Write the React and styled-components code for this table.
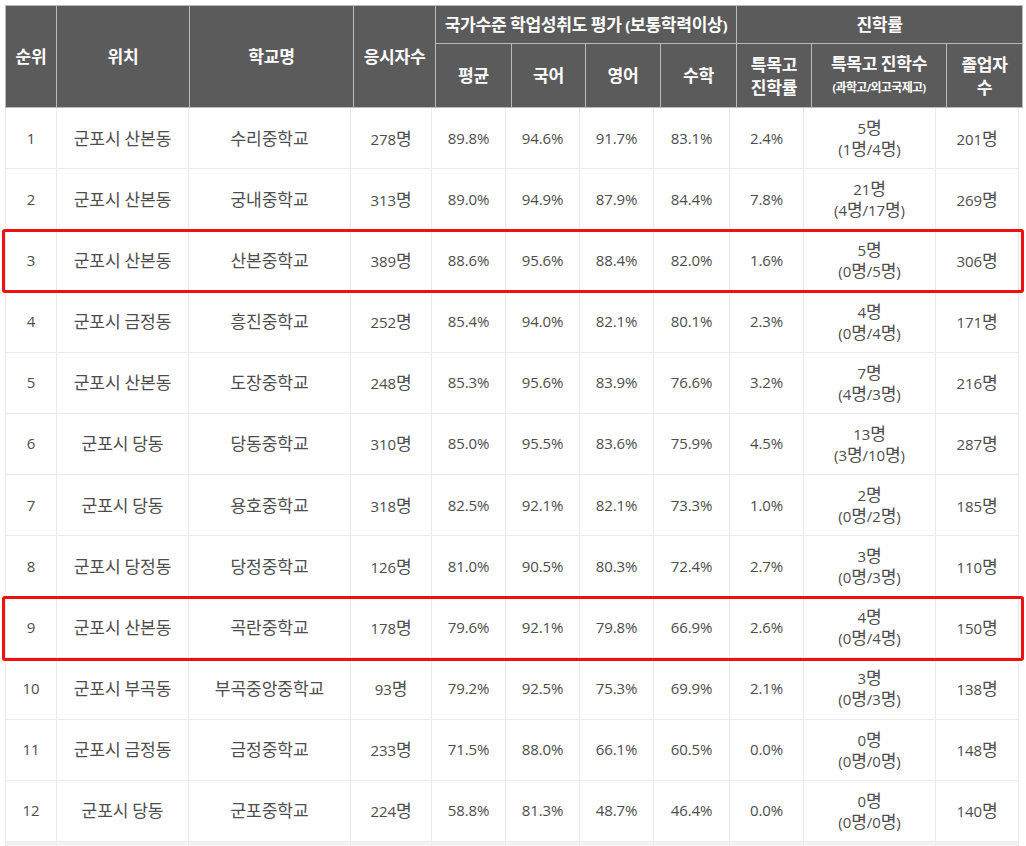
import React from 'react'
import styled, { createGlobalStyle } from 'styled-components'

const GlobalStyle = createGlobalStyle`
    body {
        margin: 0;
        background: #fff;
        font-family: "Open Sans", "Noto Sans CJK KR", sans-serif;
    }
`

const headCols = [51, 133, 164, 82, 76, 74, 75, 76, 75, 135, 76]
const bodyCols = [51, 132, 162, 81, 74, 74, 74, 76, 74, 132, 83]

const ROW_H = 61.17

const rows = [
    ['1', '군포시 산본동', '수리중학교', '278명', '89.8%', '94.6%', '91.7%', '83.1%', '2.4%', '5명', '(1명/4명)', '201명'],
    ['2', '군포시 산본동', '궁내중학교', '313명', '89.0%', '94.9%', '87.9%', '84.4%', '7.8%', '21명', '(4명/17명)', '269명'],
    ['3', '군포시 산본동', '산본중학교', '389명', '88.6%', '95.6%', '88.4%', '82.0%', '1.6%', '5명', '(0명/5명)', '306명'],
    ['4', '군포시 금정동', '흥진중학교', '252명', '85.4%', '94.0%', '82.1%', '80.1%', '2.3%', '4명', '(0명/4명)', '171명'],
    ['5', '군포시 산본동', '도장중학교', '248명', '85.3%', '95.6%', '83.9%', '76.6%', '3.2%', '7명', '(4명/3명)', '216명'],
    ['6', '군포시 당동', '당동중학교', '310명', '85.0%', '95.5%', '83.6%', '75.9%', '4.5%', '13명', '(3명/10명)', '287명'],
    ['7', '군포시 당동', '용호중학교', '318명', '82.5%', '92.1%', '82.1%', '73.3%', '1.0%', '2명', '(0명/2명)', '185명'],
    ['8', '군포시 당정동', '당정중학교', '126명', '81.0%', '90.5%', '80.3%', '72.4%', '2.7%', '3명', '(0명/3명)', '110명'],
    ['9', '군포시 산본동', '곡란중학교', '178명', '79.6%', '92.1%', '79.8%', '66.9%', '2.6%', '4명', '(0명/4명)', '150명'],
    ['10', '군포시 부곡동', '부곡중앙중학교', '93명', '79.2%', '92.5%', '75.3%', '69.9%', '2.1%', '3명', '(0명/3명)', '138명'],
    ['11', '군포시 금정동', '금정중학교', '233명', '71.5%', '88.0%', '66.1%', '60.5%', '0.0%', '0명', '(0명/0명)', '148명'],
    ['12', '군포시 당동', '군포중학교', '224명', '58.8%', '81.3%', '48.7%', '46.4%', '0.0%', '0명', '(0명/0명)', '140명'],
]

const highlighted = [2, 8]

// hangul runs get the CJK face a bit larger than the latin digits
const ko = (text) =>
    text.split(/([\uAC00-\uD7A3]+)/).map((part, i) =>
        /[\uAC00-\uD7A3]/.test(part) ? <Ko key={i}>{part}</Ko> : part
    )

export default function App() {
    return (
        <Page>
            <GlobalStyle />
            <HeadTable>
                <colgroup>
                    {headCols.map((w, i) => <col key={i} style={{ width: w }} />)}
                </colgroup>
                <thead>
                    <tr>
                        <Th rowSpan={2}>{ko('순위')}</Th>
                        <Th rowSpan={2}>{ko('위치')}</Th>
                        <Th rowSpan={2}>{ko('학교명')}</Th>
                        <Th rowSpan={2}>{ko('응시자수')}</Th>
                        <Th colSpan={4} $top>{ko('국가수준 학업성취도 평가 (보통학력이상)')}</Th>
                        <Th colSpan={3} $top>{ko('진학률')}</Th>
                    </tr>
                    <tr>
                        <Th $sub>{ko('평균')}</Th>
                        <Th $sub>{ko('국어')}</Th>
                        <Th $sub>{ko('영어')}</Th>
                        <Th $sub>{ko('수학')}</Th>
                        <Th $sub>{ko('특목고')}<br />{ko('진학률')}</Th>
                        <Th $sub>{ko('특목고 진학수')}<br /><Small>{ko('(과학고/외고국제고)')}</Small></Th>
                        <Th $sub>{ko('졸업자')}<br />{ko('수')}</Th>
                    </tr>
                </thead>
            </HeadTable>
            <BodyWrap>
                <BodyTable>
                    <colgroup>
                        {bodyCols.map((w, i) => <col key={i} style={{ width: w }} />)}
                    </colgroup>
                    <tbody>
                        {rows.map((r) => (
                            <tr key={r[0]}>
                                {r.slice(0, 9).map((c, i) => <Td key={i}>{ko(c)}</Td>)}
                                <Td>{ko(r[9])}<br />{ko(r[10])}</Td>
                                <Td>{ko(r[11])}</Td>
                            </tr>
                        ))}
                        <EmptyRow>
                            {bodyCols.map((w, i) => <Td key={i} />)}
                        </EmptyRow>
                    </tbody>
                </BodyTable>
                {highlighted.map((i) => <Highlight key={i} $row={i} />)}
            </BodyWrap>
        </Page>
    )
}

const Page = styled.div`
    padding: 5px 0 0 5px;
    height: 841px;
    overflow: hidden;
`

const Ko = styled.span`
    font-family: "Noto Sans CJK KR", sans-serif;
    font-size: 1.14em;
`

const HeadTable = styled.table`
    width: 1017px;
    table-layout: fixed;
    border-collapse: collapse;
    background-color: #5b5b5b;
`

const Th = styled.th`
    height: ${({ $top, $sub }) => ($top ? '37px' : $sub ? '63px' : 'auto')};
    padding: 0;
    border: 1px solid #b9b9b9;
    color: #fff;
    font-size: 15px;
    font-weight: 700;
    line-height: 22px;
    text-align: center;
    vertical-align: middle;
    letter-spacing: -0.3px;
`

const Small = styled.span`
    font-size: 10.5px;
    letter-spacing: -0.6px;
`

const BodyWrap = styled.div`
    position: relative;
`

const BodyTable = styled.table`
    width: 1013px;
    table-layout: fixed;
    border-collapse: collapse;
`

const Td = styled.td`
    height: ${ROW_H - 1}px;
    padding: 0;
    border: 1px solid #ebebeb;
    border-top: none;
    color: #4d4d4d;
    font-size: 15px;
    line-height: 19px;
    text-align: center;
    vertical-align: middle;
    letter-spacing: -0.1px;
`

const EmptyRow = styled.tr`
    background-color: #f2f2f2;
`

const Highlight = styled.div`
    position: absolute;
    left: -3px;
    width: 1016px;
    top: ${({ $row }) => $row * ROW_H - 1}px;
    height: ${ROW_H - 3}px;
    border: 3px solid #f01010;
    border-radius: 3px;
    pointer-events: none;
`
